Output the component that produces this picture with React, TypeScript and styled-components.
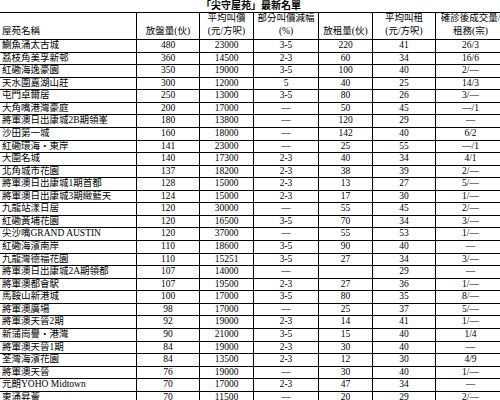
import React from "react";
import styled, { createGlobalStyle } from "styled-components";

const Global = createGlobalStyle`
  html, body { margin: 0; padding: 0; background: #fff; }
  body { width: 500px; height: 400px; overflow: hidden; }
`;

const Page = styled.div`
  width: 500px;
  height: 400px;
  overflow: hidden;
  background: #fff;
  color: #000;
  font-family: "Liberation Serif", "Noto Sans CJK TC", serif;
  font-size: 9.5px;
`;

const Title = styled.div`
  box-sizing: border-box;
  height: 13px;
  border-bottom: 1px solid #000;
  width: 506px;
  display: flex;
  align-items: center;
  justify-content: center;
  padding-right: 4px;
  font-weight: bold;
  font-size: 10px;
  line-height: 12px;
`;

const Sheet = styled.div`
  display: grid;
  grid-template-columns: 137px 63px 54px 65px 54px 63px 70px;
  grid-template-rows: 27px;
  grid-auto-rows: 12.57px;
  width: 506px;
`;

const HeadCell = styled.div<{ $left?: boolean }>`
  box-sizing: border-box;
  border-right: 1px solid #000;
  border-bottom: 1px solid #000;
  display: flex;
  flex-direction: column;
  justify-content: flex-end;
  align-items: ${(p) => (p.$left ? "flex-start" : "center")};
  padding-left: ${(p) => (p.$left ? "2px" : "0")};
  padding-bottom: 1px;
  line-height: 13px;
  white-space: nowrap;
  overflow: hidden;
`;

const Cell = styled.div<{ $left?: boolean }>`
  box-sizing: border-box;
  border-right: 1px solid #000;
  border-bottom: 1px solid #000;
  display: flex;
  align-items: center;
  justify-content: ${(p) => (p.$left ? "flex-start" : "center")};
  padding-left: ${(p) => (p.$left ? "2px" : "0")};
  line-height: 1;
  white-space: nowrap;
  overflow: hidden;
`;

const headers: string[][] = [
  ["屋苑名稱"],
  ["放盤量(伙)"],
  ["平均叫價", "(元/方呎)"],
  ["部分叫價減幅", "(%)"],
  ["放租量(伙)"],
  ["平均叫租", "(元/方呎)"],
  ["確診後成交量/", "租務(宗)"],
];

const rows: string[][] = [
  ["鰂魚涌太古城", "480", "23000", "3-5", "220", "41", "26/3"],
  ["荔枝角美孚新邨", "360", "14500", "2-3", "60", "34", "16/6"],
  ["紅磡海逸豪園", "350", "19000", "3-5", "100", "40", "2/—"],
  ["天水圍嘉湖山莊", "300", "12000", "5", "40", "25", "14/3"],
  ["屯門卓爾居", "250", "13000", "3-5", "80", "26", "3/—"],
  ["大角嘴港灣豪庭", "200", "17000", "—", "50", "45", "—/1"],
  ["將軍澳日出康城2B期領峯", "180", "13800", "—", "120", "29", "—"],
  ["沙田第一城", "160", "18000", "—", "142", "40", "6/2"],
  ["紅磡環海・東岸", "141", "23000", "—", "25", "55", "—/1"],
  ["大圍名城", "140", "17300", "2-3", "40", "34", "4/1"],
  ["北角城市花園", "137", "18200", "2-3", "38", "39", "2/—"],
  ["將軍澳日出康城1期首都", "128", "15000", "2-3", "13", "27", "5/—"],
  ["將軍澳日出康城3期緻藍天", "124", "15000", "2-3", "17", "30", "1/—"],
  ["九龍站漾日居", "120", "30000", "—", "55", "45", "2/—"],
  ["紅磡黃埔花園", "120", "16500", "3-5", "70", "34", "3/—"],
  ["尖沙嘴GRAND AUSTIN", "120", "37000", "—", "55", "53", "1/—"],
  ["紅磡海濱南岸", "110", "18600", "3-5", "90", "40", "—"],
  ["九龍灣德福花園", "110", "15251", "3-5", "27", "34", "3/—"],
  ["將軍澳日出康城2A期領都", "107", "14000", "—", "", "29", "—"],
  ["將軍澳都會駅", "107", "19500", "2-3", "27", "36", "1/—"],
  ["馬鞍山新港城", "100", "17000", "3-5", "80", "35", "8/—"],
  ["將軍澳廣場", "98", "17000", "—", "25", "37", "5/—"],
  ["將軍澳天晉2期", "92", "19000", "2-3", "14", "41", "1/—"],
  ["新蒲崗譽・港灣", "90", "21000", "3-5", "15", "40", "1/4"],
  ["將軍澳天晉1期", "84", "19000", "2-3", "30", "40", "—"],
  ["荃灣海濱花園", "84", "13500", "2-3", "12", "30", "4/9"],
  ["將軍澳天晉", "76", "19000", "—", "30", "40", "1/—"],
  ["元朗YOHO Midtown", "70", "17000", "2-3", "47", "34", "—"],
  ["東涌昇薈", "70", "11500", "—", "20", "29", "2/—"],
];

export default function App() {
  return (
    <Page>
      <Global />
      <Title>「尖守屋苑」最新名單</Title>
      <Sheet>
        {headers.map((h, i) => (
          <HeadCell key={`h${i}`} $left={i === 0}>
            {h.map((line, j) => (
              <span key={j}>{line}</span>
            ))}
          </HeadCell>
        ))}
        {rows.map((r, ri) =>
          r.map((v, ci) => (
            <Cell key={`${ri}-${ci}`} $left={ci === 0}>
              {v}
            </Cell>
          ))
        )}
      </Sheet>
    </Page>
  );
}
